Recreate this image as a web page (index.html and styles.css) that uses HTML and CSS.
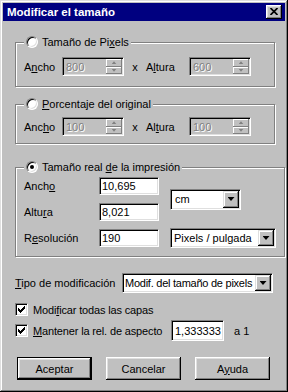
FILE: index.html
```html
<!DOCTYPE html>
<html lang="es">
<head>
    <meta charset="UTF-8">
    <title>Modificar el tamaño</title>
    <link rel="stylesheet" href="styles.css">
</head>
<body>

    <div class="window">
        <!-- Title bar -->
        <div class="titlebar">
            <span class="title">Modificar el tamaño</span>
            <span class="close-btn">
                <svg width="8" height="7" viewBox="0 0 8 7"><path d="M0.5 0 L7.5 7 M7.5 0 L0.5 7" stroke="#000" stroke-width="1.7" fill="none"/></svg>
            </span>
        </div>

        <div class="dialog-body">
            <!-- Pixel size -->
            <fieldset class="group group-pixels">
                <legend><span class="legend-inner"><span class="radio"></span><span>Tamaño de Pi<u>x</u>els</span></span></legend>
                <div class="size-row">
                    <span class="lbl lbl-w">A<u>n</u>cho</span>
                    <div class="field spin disabled">
                        <span class="val">800</span>
                        <span class="spin-btns"><span class="sb up"></span><span class="sb down"></span></span>
                    </div>
                    <span class="times">x</span>
                    <span class="lbl lbl-h">A<u>l</u>tura</span>
                    <div class="field spin disabled">
                        <span class="val">600</span>
                        <span class="spin-btns"><span class="sb up"></span><span class="sb down"></span></span>
                    </div>
                </div>
            </fieldset>

            <!-- Percentage -->
            <fieldset class="group group-percent">
                <legend><span class="legend-inner"><span class="radio"></span><span><u>P</u>orcentaje del original</span></span></legend>
                <div class="size-row">
                    <span class="lbl lbl-w">Anc<u>h</u>o</span>
                    <div class="field spin disabled">
                        <span class="val">100</span>
                        <span class="spin-btns"><span class="sb up"></span><span class="sb down"></span></span>
                    </div>
                    <span class="times">x</span>
                    <span class="lbl lbl-h">Al<u>t</u>ura</span>
                    <div class="field spin disabled">
                        <span class="val">100</span>
                        <span class="spin-btns"><span class="sb up"></span><span class="sb down"></span></span>
                    </div>
                </div>
            </fieldset>

            <!-- Print size -->
            <fieldset class="group group-print">
                <legend><span class="legend-inner"><span class="radio checked"></span><span>Tamaño real <u>d</u>e la impresión</span></span></legend>
                <div class="print-grid">
                    <span class="lbl">Anch<u>o</u></span>
                    <div class="field text"><span class="val">10,695</span></div>
                    <div class="combo combo-unit">
                        <span class="val">cm</span>
                        <span class="drop"></span>
                    </div>

                    <span class="lbl">Altu<u>r</u>a</span>
                    <div class="field text"><span class="val">8,021</span></div>

                    <span class="lbl">R<u>e</u>solución</span>
                    <div class="field text"><span class="val">190</span></div>
                    <div class="combo combo-res">
                        <span class="val">Pixels / pulgada</span>
                        <span class="drop"></span>
                    </div>
                </div>
            </fieldset>

            <!-- Resize type -->
            <div class="type-row">
                <span class="lbl type-lbl"><u>T</u>ipo de modificación</span>
                <div class="combo combo-type">
                    <span class="val">Modif. del tamaño de pixels</span>
                    <span class="drop"></span>
                </div>
            </div>

            <div class="check-row">
                <span class="check"><svg width="7" height="7" viewBox="0 0 7 7"><path d="M0 2v3h1v1h1v1h1v-1h1v-1h1v-1h1v-1h1v-3h-1v1h-1v1h-1v1h-1v1h-1v-1h-1v-1z" fill="#000"/></svg></span>
                <span class="check-lbl">Modi<u>f</u>icar todas las capas</span>
            </div>

            <div class="check-row aspect-row">
                <span class="check"><svg width="7" height="7" viewBox="0 0 7 7"><path d="M0 2v3h1v1h1v1h1v-1h1v-1h1v-1h1v-1h1v-3h-1v1h-1v1h-1v1h-1v1h-1v-1h-1v-1z" fill="#000"/></svg></span>
                <span class="check-lbl aspect-lbl"><u>M</u>antener la rel. de aspecto</span>
                <div class="field aspect"><span class="val">1,333333</span></div>
                <span class="ratio">a 1</span>
            </div>

            <!-- Buttons -->
            <div class="button-row">
                <span class="btn default">Aceptar</span>
                <span class="btn">Cancelar</span>
                <span class="btn">A<u>y</u>uda</span>
            </div>
        </div>
    </div>

</body>
</html>
```

FILE: styles.css
```css
/* Win98 style dialog */
body {
    margin: 0;
    background-color: #c0c0c0;
    color: #000;
    font-family: "Liberation Sans", Arial, sans-serif;
    font-size: 11px;
}

u {
    text-underline-offset: 1px;
}

.window {
    width: 288px;
    height: 392px;
    box-sizing: border-box;
    padding: 3px;
    background-color: #c0c0c0;
    box-shadow: inset -1px -1px #000, inset 1px 1px #dfdfdf, inset -2px -2px #808080, inset 2px 2px #fff;
}

/* Title bar */
.titlebar {
    height: 18px;
    background-color: #000080;
    display: flex;
    align-items: center;
    justify-content: space-between;
    padding: 0 3px 0 4px;
}

.title {
    color: #fff;
    font-weight: bold;
    font-size: 11.5px;
}

.close-btn {
    width: 16px;
    height: 14px;
    box-sizing: border-box;
    background-color: #c0c0c0;
    box-shadow: inset -1px -1px #000, inset 1px 1px #fff, inset -2px -2px #808080, inset 2px 2px #dfdfdf;
    display: flex;
    align-items: center;
    justify-content: center;
    padding: 0 1px 1px 0;
}

.close-btn svg {
    display: block;
}

/* Body */
.dialog-body {
    padding-left: 12px;
    white-space: nowrap;
}

/* Group boxes */
.group {
    width: 260px;
    box-sizing: border-box;
    margin: 14px 0 0 0;
    border: 1px solid #808080;
    box-shadow: inset 1px 1px #fff, 1px 1px #fff;
    padding: 0 8px 10px;
}

.group legend {
    padding: 0 2px;
    background-color: #c0c0c0;
    line-height: 14px;
}

.legend-inner {
    display: flex;
    align-items: center;
    gap: 4px;
}

.group-percent {
    margin-top: 10px;
    padding-bottom: 7px;
}

.group-print {
    margin-top: 16px;
    padding-bottom: 9px;
}

/* Radio */
.radio {
    width: 12px;
    height: 12px;
    box-sizing: border-box;
    border-radius: 50%;
    background-color: #fff;
    border: 1px solid;
    border-color: #808080 #fff #fff #808080;
    box-shadow: inset 1px 1px #000, inset -1px -1px #dfdfdf;
    display: flex;
    align-items: center;
    justify-content: center;
}

.radio.checked::after {
    content: "";
    width: 4px;
    height: 4px;
    border-radius: 50%;
    background-color: #000;
}

/* Size rows */
.size-row {
    display: flex;
    align-items: center;
    margin-top: 8px;
}

.group-percent .size-row {
    margin-top: 6px;
}

.lbl-w {
    width: 38px;
}

.lbl-h {
    width: 43px;
}

.times {
    width: 22px;
    text-align: center;
}

/* Edit fields */
.field {
    box-sizing: border-box;
    height: 19px;
    border: 1px solid;
    border-color: #808080 #fff #fff #808080;
    box-shadow: inset 1px 1px #000, inset -1px -1px #dfdfdf;
    background-color: #fff;
    display: flex;
    align-items: center;
    padding: 1px 1px 1px 3px;
}

.field .val {
    flex: 1;
}

.field.disabled {
    background-color: #c0c0c0;
    color: #808080;
    text-shadow: 1px 1px #fff;
}

.spin {
    width: 62px;
}

.spin-btns {
    align-self: stretch;
    width: 16px;
    display: flex;
    flex-direction: column;
}

.sb {
    flex: 1;
    background-color: #c0c0c0;
    box-shadow: inset -1px -1px #808080, inset 1px 1px #fff;
    display: flex;
    align-items: center;
    justify-content: center;
}

.sb::after {
    content: "";
    width: 5px;
    height: 3px;
    background-color: #808080;
}

.sb.up::after {
    clip-path: polygon(50% 0, 100% 100%, 0 100%);
}

.sb.down::after {
    clip-path: polygon(0 0, 100% 0, 50% 100%);
}

/* Print size grid */
.print-grid {
    display: grid;
    grid-template-columns: 64px 60px 106px;
    grid-template-rows: 18px 18px 18px;
    column-gap: 11px;
    row-gap: 8px;
    align-items: center;
    margin-top: 3px;
}

.text {
    height: 18px;
    padding-left: 2px;
}

/* Combo boxes */
.combo {
    box-sizing: border-box;
    height: 20px;
    border: 1px solid;
    border-color: #808080 #fff #fff #808080;
    box-shadow: inset 1px 1px #000, inset -1px -1px #dfdfdf;
    background-color: #fff;
    display: flex;
    align-items: center;
    padding: 1px 1px 1px 3px;
    overflow: hidden;
}

.combo .val {
    flex: 1;
    overflow: hidden;
}

.drop {
    align-self: stretch;
    width: 16px;
    flex: none;
    background-color: #c0c0c0;
    box-shadow: inset -1px -1px #000, inset 1px 1px #dfdfdf, inset -2px -2px #808080, inset 2px 2px #fff;
    display: flex;
    align-items: center;
    justify-content: center;
}

.drop::after {
    content: "";
    width: 7px;
    height: 4px;
    background-color: #000;
    clip-path: polygon(0 0, 100% 0, 50% 100%);
}

.combo-unit {
    grid-column: 3;
    grid-row: 1 / 3;
    width: 71px;
    height: 21px;
    align-self: center;
}

.combo-unit .val {
    padding-left: 1px;
}

.combo-res {
    grid-column: 3;
    grid-row: 3;
    width: 106px;
}

/* Resize type */
.type-row {
    display: flex;
    align-items: center;
    margin-top: 16px;
}

.type-lbl {
    width: 107px;
}

.combo-type {
    width: 151px;
    padding-left: 2px;
}

.combo-type .val {
    letter-spacing: -0.25px;
}

/* Checkboxes */
.check-row {
    display: flex;
    align-items: center;
    gap: 5px;
    margin-top: 10px;
    height: 13px;
}

.check {
    width: 13px;
    height: 13px;
    box-sizing: border-box;
    flex: none;
    border: 1px solid;
    border-color: #808080 #fff #fff #808080;
    box-shadow: inset 1px 1px #000, inset -1px -1px #dfdfdf;
    background-color: #fff;
    display: flex;
    align-items: center;
    justify-content: center;
}

.check svg {
    display: block;
}

.check-lbl {
    letter-spacing: -0.15px;
}

.aspect-row {
    margin-top: 4px;
    height: 21px;
}

.aspect-lbl {
    width: 133px;
}

.aspect {
    width: 53px;
    height: 21px;
    flex: none;
}

.ratio {
    margin-left: 5px;
}

/* Buttons */
.button-row {
    display: flex;
    gap: 14px;
    margin-top: 16px;
    padding-left: 2px;
}

.btn {
    width: 75px;
    height: 23px;
    box-sizing: border-box;
    background-color: #c0c0c0;
    box-shadow: inset -1px -1px #000, inset 1px 1px #fff, inset -2px -2px #808080, inset 2px 2px #dfdfdf;
    display: flex;
    align-items: center;
    justify-content: center;
}

.btn.default {
    border: 1px solid #000;
}
```
